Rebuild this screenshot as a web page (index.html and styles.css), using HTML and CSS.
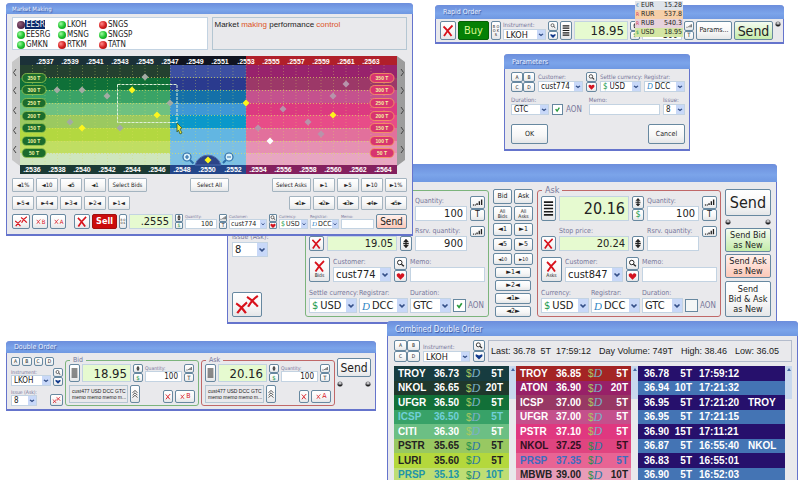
FILE: index.html
```
<!DOCTYPE html>
<html lang="en">
<head>
<meta charset="utf-8">
<title>Trading Desktop</title>
<link rel="stylesheet" href="styles.css">
</head>
<body>
<svg class="defs" aria-hidden="true">
  <symbol id="sig" viewBox="0 0 12 8"><path d="M1 7h1M3 7h1M5.5 7V5M8 7V3M10.5 7V1" stroke="#222" stroke-width="1.5" fill="none"/></symbol>
  <symbol id="mag" viewBox="0 0 12 10"><circle cx="5" cy="4" r="3" fill="#fff" stroke="#222" stroke-width="1.3"/><path d="M7.3 6.2L10.5 9" stroke="#222" stroke-width="1.8"/></symbol>
  <symbol id="heart" viewBox="0 0 12 10"><path d="M6 9.5L1.2 5Q0 2 2.3 1.2Q4.8.6 6 3Q7.2.6 9.7 1.2Q12 2 10.8 5Z" fill="#d41420"/></symbol>
  <symbol id="fav" viewBox="0 0 12 10"><path d="M6 9.5L1 4.500Q.5 2 1.5 1.500L6 3.500L10.500 1.500Q11.500 2 11 4.500Z" fill="#123a8c"/></symbol>
  <symbol id="ud" viewBox="0 0 10 12"><path d="M5 0L8.500 4H1.500ZM5 12L8.500 8H1.500Z" fill="#222"/><path d="M5 3V9M1.500 6H8.500" stroke="#222" stroke-width="1.600"/></symbol>
  <symbol id="x" viewBox="0 0 12 12"><path d="M1.500 2Q5 5 9.500 11.500M10.500 1Q6 5 2 11.500" stroke="#d8121c" stroke-width="1.800" fill="none"/></symbol>
  <symbol id="xx" viewBox="0 0 24 18"><path d="M2 8Q7 11 11 17M12 7Q7 11 3 17M12 2Q17 5 22 11M22 1Q16 5 13 11" stroke="#d8121c" stroke-width="2" fill="none"/></symbol>
  <symbol id="menu" viewBox="0 0 12 18"><path d="M1 2H11M1 5.500H11M1 9H11M1 12.500H11M1 16H11" stroke="#1b1b1b" stroke-width="1.800"/></symbol>
  <symbol id="chev" viewBox="0 0 10 14"><path d="M1 5L5 1L9 5M1 9L5 5L9 9M1 13L5 9L9 13" stroke="#222" stroke-width="1.300" fill="none"/></symbol>
  <symbol id="ball" viewBox="0 0 8 8"><circle cx="4" cy="4" r="3.500" fill="#77777c"/><path d="M2 2.500Q4 .8 6 2.500L4 4Z" fill="#eee"/><path d="M1 5Q4 8 7 5" stroke="#111" fill="none" stroke-width="1.300"/></symbol>
</svg>

<main class="desktop">

<section class="win large stop">
  <h2></h2>
  <div class="body cols">
    <div class="side">
      <label class="field"><span>Issue (Ask):</span><select><option>8</option></select></label>
      <button class="wide-x" aria-label="Cancel all"><svg><use href="#xx"/></svg></button>
    </div>
    <fieldset class="bid">
      <legend>Bid</legend>
      <div class="quote">
        <button aria-label="Depth"><svg><use href="#menu"/></svg></button>
        <input class="price" aria-label="Bid price" value="18.95">
        <div class="stack"><button aria-label="Step"><svg><use href="#ud"/></svg></button><button class="usd">$</button></div>
        <label class="field"><span>Quantity:</span><input value="100"></label>
        <div class="stack"><button aria-label="Volume"><svg><use href="#sig"/></svg></button><button>T</button></div>
        <button class="low" aria-label="Clear stop"><svg><use href="#x"/></svg></button>
        <label class="field"><span>Stop price:</span><input class="green" value="19.05"></label>
        <button class="low" aria-label="Step"><svg><use href="#ud"/></svg></button>
        <label class="field"><span>Rsrv. quantity:</span><input value="900"></label>
        <button class="top" aria-label="Volume"><svg><use href="#sig"/></svg></button>
      </div>
      <div class="client">
        <button class="xlabel"><svg><use href="#x"/></svg>Bids</button>
        <label class="field"><span>Customer:</span><select><option>cust774</option></select></label>
        <div class="stack"><button aria-label="Find"><svg><use href="#mag"/></svg></button><button aria-label="Favourite"><svg><use href="#heart"/></svg></button></div>
        <label class="field"><span>Memo:</span><input></label>
      </div>
      <div class="terms">
        <label class="field"><span>Settle currency:</span><span class="pick"><b>$</b><select><option>USD</option></select></span></label>
        <label class="field"><span>Registrar:</span><span class="pick"><i>D</i><select><option>DCC</option></select></span></label>
        <label class="field"><span>Duration:</span><select><option>GTC</option></select></label>
        <label class="check"><input type="checkbox" checked>AON</label>
      </div>
    </fieldset>
    <div class="ladder">
      <button>Bid</button><button>Ask</button>
      <button class="two">All<br>Bids</button><button class="two">All<br>Asks</button>
      <button>◄1</button><button>►1</button>
      <button>◄5</button><button>►5</button>
      <button class="tiny">◄10</button><button class="tiny">►10</button>
      <button class="full">►1◄</button><button class="full">►2◄</button>
      <button class="full">◄1►</button><button class="full">◄2►</button>
    </div>
    <fieldset class="ask">
      <legend>Ask</legend>
      <div class="quote">
        <button aria-label="Depth"><svg><use href="#menu"/></svg></button>
        <input class="price" aria-label="Ask price" value="20.16">
        <div class="stack"><button aria-label="Step"><svg><use href="#ud"/></svg></button><button class="usd">$</button></div>
        <label class="field"><span>Quantity:</span><input value="100"></label>
        <div class="stack"><button aria-label="Volume"><svg><use href="#sig"/></svg></button><button>T</button></div>
        <button class="low" aria-label="Clear stop"><svg><use href="#x"/></svg></button>
        <label class="field"><span>Stop price:</span><input class="green" value="20.24"></label>
        <button class="low" aria-label="Step"><svg><use href="#ud"/></svg></button>
        <label class="field"><span>Rsrv. quantity:</span><input></label>
        <button class="top" aria-label="Volume"><svg><use href="#sig"/></svg></button>
      </div>
      <div class="client">
        <button class="xlabel"><svg><use href="#x"/></svg>Asks</button>
        <label class="field"><span>Customer:</span><select><option>cust847</option></select></label>
        <div class="stack"><button aria-label="Find"><svg><use href="#mag"/></svg></button><button aria-label="Favourite"><svg><use href="#heart"/></svg></button></div>
        <label class="field"><span>Memo:</span><input></label>
      </div>
      <div class="terms">
        <label class="field"><span>Currency:</span><span class="pick"><b>$</b><select><option>USD</option></select></span></label>
        <label class="field"><span>Registrar:</span><span class="pick"><i>D</i><select><option>DCC</option></select></span></label>
        <label class="field"><span>Duration:</span><select><option>GTC</option></select></label>
        <label class="check"><input type="checkbox">AON</label>
      </div>
    </fieldset>
    <div class="sends">
      <button class="send">Send</button>
      <div class="balls"><svg><use href="#ball"/></svg><svg><use href="#ball"/></svg></div>
      <button class="new go">Send Bid<br>as New</button>
      <button class="new warn">Send Ask<br>as New</button>
      <button class="new both">Send<br>Bid &amp; Ask<br>as New</button>
    </div>
  </div>
</section>

<section class="win small market">
  <h2>Market Making</h2>
  <div class="body">
    <div class="boxes">
      <ul class="tickers">
        <li class="on">EESR</li><li class="up">LKOH</li><li>SNGS</li>
        <li class="up">EESRG</li><li class="up">MSNG</li><li class="up">SNGSP</li>
        <li class="up">GMKN</li><li>RTKM</li><li>TATN</li>
      </ul>
      <p class="note">Market <em>making</em> performance <em>control</em></p>
    </div>
    <svg class="chart" viewBox="12 56 395 118" role="img" aria-label="Market depth">
      <defs>
        <linearGradient id="metal"><stop offset="0" stop-color="#c8c8c8"/><stop offset="1" stop-color="#9c9c9c"/></linearGradient>
        <path id="d" d="M0-3.500L3.500 0L0 3.500L-3.500 0Z"/>
        <rect id="p" x="-12" y="-4.500" width="24" height="9" rx="4.500"/>
      </defs>
      <path d="M20 56L12 62V160L20 166ZM397 56L405 62V160L397 166Z" fill="url(#metal)"/>
      <path d="M16 69L13.500 72.500L16 76M16 87L13.500 90.500L16 94M16 107L13.500 110.500L16 114M16 127L13.500 130.500L16 134M16 146L13.500 149.500L16 153M401 69L403.500 72.500L401 76M401 87L403.500 90.500L401 94M401 107L403.500 110.500L401 114M401 127L403.500 130.500L401 134M401 146L403.500 149.500L401 153" fill="none" stroke="#444"/>
      <g class="bands">
        <path fill="#1b3138" d="M20 56h150v9H20z"/><path fill="#24402f" d="M20 65h150v13H20z"/><path fill="#0f7038" d="M20 78h150v12H20z"/><path fill="#3aa366" d="M20 90h150v13H20z"/><path fill="#6fc180" d="M20 103h150v12H20z"/><path fill="#9bc960" d="M20 115h150v13H20z"/><path fill="#b3d840" d="M20 128h150v13H20z"/><path fill="#c0de62" d="M20 141h150v12H20z"/><path fill="#cfe6bd" d="M20 153h150v12H20z"/><path fill="#1b3a34" d="M20 165h150v9H20z"/>
        <path fill="#101420" d="M170 56h76v9h-76z"/><path fill="#3d50a2" d="M170 65h76v13h-76z"/><path fill="#2a3a8e" d="M170 78h76v12h-76z"/><path fill="#1470a8" d="M170 90h76v13h-76z"/><path fill="#3e98d6" d="M170 103h76v12h-76z"/><path fill="#0a98ca" d="M170 115h76v13h-76z"/><path fill="#62b6e2" d="M170 128h76v13h-76z"/><path fill="#7cc0e4" d="M170 141h76v24h-76z"/><path fill="#23468a" d="M170 165h76v9h-76z"/>
        <path fill="#b01f2a" d="M246 56h151v9H246z"/><path fill="#98226c" d="M246 65h151v13H246z"/><path fill="#9c3868" d="M246 78h151v12H246z"/><path fill="#c4528e" d="M246 90h151v13H246z"/><path fill="#dc3a80" d="M246 103h151v12H246z"/><path fill="#e84c88" d="M246 115h151v13H246z"/><path fill="#e2709c" d="M246 128h151v13H246z"/><path fill="#e690b2" d="M246 141h151v12H246z"/><path fill="#e8a6c2" d="M246 153h151v12H246z"/><path fill="#84205e" d="M246 165h151v9H246z"/>
      </g>
      <path class="grid" d="M46 77.500H372M46 90.500H372M46 103.500H372M46 115.500H372M46 128.500H372M46 141.500H372M46 153.500H372"/>
      <path class="grid v" d="M32.500 65V165M45 65V165M57.500 65V165M70 65V165M82.500 65V165M95 65V165M107.500 65V165M120 65V165M132.500 65V165M145 65V165M157.500 65V165M170.500 65V165M183 65V165M195.500 65V165M208 65V165M220.500 65V165M233 65V165M246 65V165M258.500 65V165M271 65V165M283.500 65V165M296 65V165M308.500 65V165M321 65V165M333.500 65V165M346 65V165M358.500 65V165M371 65V165M384 65V165"/>
      <rect x="117.500" y="84.500" width="59.500" height="38" fill="none" stroke="#dff0d8" stroke-dasharray="3 1"/>
      <g class="axis">
        <text x="45" y="64">.2537</text><text x="70" y="64">.2539</text><text x="95" y="64">.2541</text><text x="120" y="64">.2543</text><text x="145" y="64">.2545</text><text x="170" y="64">.2547</text><text x="195" y="64">.2549</text><text x="220" y="64">.2551</text><text x="246" y="64">.2553</text><text x="271" y="64">.2555</text><text x="296" y="64">.2557</text><text x="321" y="64">.2559</text><text x="346" y="64">.2561</text><text x="371" y="64">.2563</text>
        <text x="32" y="172">.2536</text><text x="57" y="172">.2538</text><text x="82" y="172">.2540</text><text x="107" y="172">.2542</text><text x="132" y="172">.2544</text><text x="157" y="172">.2546</text><text x="182" y="172">.2548</text><text x="207" y="172">.2550</text><text x="233" y="172">.2552</text><text x="258" y="172">.2554</text><text x="283" y="172">.2556</text><text x="308" y="172">.2558</text><text x="333" y="172">.2560</text><text x="358" y="172">.2562</text><text x="383" y="172">.2564</text>
      </g>
      <g class="pills left">
        <use href="#p" x="34" y="78"/><use href="#p" x="34" y="90"/><use href="#p" x="34" y="103"/><use href="#p" x="34" y="116"/><use href="#p" x="34" y="128"/><use href="#p" x="34" y="141"/><use href="#p" x="34" y="153"/>
        <text x="34" y="80">350 T</text><text x="34" y="92">300 T</text><text x="34" y="105">250 T</text><text x="34" y="118">200 T</text><text x="34" y="130">150 T</text><text x="34" y="143">100 T</text><text x="34" y="155">50 T</text>
      </g>
      <g class="pills right">
        <use href="#p" x="382" y="78"/><use href="#p" x="382" y="90"/><use href="#p" x="382" y="103"/><use href="#p" x="382" y="116"/><use href="#p" x="382" y="128"/><use href="#p" x="382" y="141"/><use href="#p" x="382" y="153"/>
        <text x="382" y="80">350 T</text><text x="382" y="92">300 T</text><text x="382" y="105">250 T</text><text x="382" y="118">200 T</text><text x="382" y="130">150 T</text><text x="382" y="143">100 T</text><text x="382" y="155">50 T</text>
      </g>
      <path d="M195 165A13.500 13.500 0 0 1 221 165Z" fill="#2c4488" stroke="#4e6cae"/>
      <g fill="#a3aba3">
        <use href="#d" x="57" y="90"/><use href="#d" x="82" y="90"/><use href="#d" x="107" y="96"/><use href="#d" x="145" y="77"/><use href="#d" x="170" y="103"/><use href="#d" x="70" y="122"/><use href="#d" x="120" y="128"/>
      </g>
      <g fill="#b794ab">
        <use href="#d" x="346" y="84"/><use href="#d" x="333" y="96"/><use href="#d" x="283" y="109"/><use href="#d" x="308" y="122"/><use href="#d" x="258" y="128"/><use href="#d" x="321" y="134"/>
      </g>
      <g fill="#fdf51c">
        <use href="#d" x="132" y="90"/><use href="#d" x="157" y="115"/><use href="#d" x="82" y="128"/><use href="#d" x="246" y="103"/><use href="#d" x="333" y="115"/><use href="#d" x="208" y="160"/>
      </g>
      <use href="#d" x="270" y="141" fill="#fff"/>
      <g fill="#d8f0fa" stroke="#2a6ca8" stroke-width="1.200">
        <path d="M190 160L193.500 163.500M226 160L223 163" stroke-width="2"/>
        <circle cx="187" cy="157" r="4"/><circle cx="229" cy="157" r="4"/>
        <path d="M185 157H189M187 155V159M227 157H231"/>
      </g>
      <path d="M177 123L182 128L180 129L182 133L180 134L178.500 130L177 132Z" fill="#e8e840" stroke="#3c5a28" stroke-width=".8"/>
    </svg>
    <div class="shift">
      <button>◄1%</button><button>◄10</button><button>◄5</button><button>◄1</button><button class="sel">Select Bids</button>
      <button class="sel mid-button">Select All</button>
      <button class="sel">Select Asks</button><button>►1</button><button>►5</button><button>►10</button><button>►1%</button>
    </div>
    <div class="shift">
      <button>►5◄</button><button>►4◄</button><button>►3◄</button><button>►2◄</button><button>►1◄</button>
      <span class="gap"></span>
      <button>◄1►</button><button>◄2►</button><button>◄3►</button><button>◄4►</button><button>◄5►</button>
    </div>
    <div class="order">
      <button class="w18" aria-label="Cancel all"><svg><use href="#xx"/></svg></button>
      <button class="w16 red"><svg><use href="#x"/></svg>B</button>
      <button class="w16 red"><svg><use href="#x"/></svg>A</button>
      <button class="w16 apart" aria-label="Clear"><svg><use href="#x"/></svg></button>
      <button class="sell">Sell</button>
      <button class="book">B O O K</button>
      <input class="price" aria-label="Price" value=".2555">
      <div class="stack"><button aria-label="Step"><svg><use href="#ud"/></svg></button><button class="usd">$</button></div>
      <label class="field w32"><span>Quantity:</span><input value="100"></label>
      <div class="stack"><button aria-label="Volume"><svg><use href="#sig"/></svg></button><button>T</button></div>
      <label class="field w38"><span>Customer:</span><select><option>cust774</option></select></label>
      <div class="stack"><button aria-label="Find"><svg><use href="#mag"/></svg></button><button aria-label="Favourite"><svg><use href="#heart"/></svg></button></div>
      <label class="field w28"><span>Currency:</span><span class="pick"><b>$</b><select><option>USD</option></select></span></label>
      <label class="field w28"><span>Registrar:</span><span class="pick"><i>D</i><select><option>DCC</option></select></span></label>
      <label class="field grow"><span>Memo:</span><input></label>
      <button class="send warn">Send</button>
    </div>
  </div>
</section>

<section class="win mid rapid">
  <h2>Rapid Order</h2>
  <div class="body row">
    <button class="w16" aria-label="Clear"><svg><use href="#x"/></svg></button>
    <button class="buy">Buy</button>
    <button class="book">B O O K S</button>
    <label class="field instr"><span>Instrument:</span><select><option>LKOH</option></select></label>
    <div class="stack"><button aria-label="Find"><svg><use href="#mag"/></svg></button><button aria-label="Favourite"><svg><use href="#fav"/></svg></button></div>
    <button class="depth" aria-label="Depth"><svg><use href="#menu"/></svg></button>
    <input class="price" aria-label="Price" value="18.95">
    <div class="stack"><button aria-label="Step"><svg><use href="#ud"/></svg></button><button class="usd">$</button></div>
    <label class="field qty"><input aria-label="Quantity" value="100"></label>
    <div class="stack"><button aria-label="Volume"><svg><use href="#sig"/></svg></button><button>T</button></div>
    <button class="params">Params...</button>
    <button class="send go">Send</button>
    <svg class="ball"><use href="#ball"/></svg>
  </div>
  <ul class="rates">
    <li><i>€</i>EUR<span>15.28</span></li>
    <li><i>R</i>RUR<span>537.8</span></li>
    <li><i>R</i>RUB<span>540.3</span></li>
    <li><i>$</i>USD<span>18.95</span></li>
  </ul>
</section>

<section class="win mid parameters">
  <h2>Parameters</h2>
  <div class="body">
    <div class="row">
      <div class="abcd"><button>A</button><button>B</button><button>C</button><button>D</button></div>
      <label class="field grow"><span>Customer:</span><select><option>cust774</option></select></label>
      <div class="stack"><button aria-label="Find"><svg><use href="#mag"/></svg></button><button aria-label="Favourite"><svg><use href="#heart"/></svg></button></div>
      <label class="field w40"><span>Settle currency:</span><span class="pick"><b>$</b><select><option>USD</option></select></span></label>
      <label class="field w40"><span>Registrar:</span><span class="pick"><i>D</i><select><option>DCC</option></select></span></label>
    </div>
    <div class="row">
      <label class="field w38"><span>Duration:</span><select><option>GTC</option></select></label>
      <label class="check"><input type="checkbox" checked>AON</label>
      <label class="field memo"><span>Memo:</span><input></label>
      <label class="field w22"><span>Issue:</span><select><option>8</option></select></label>
    </div>
    <div class="actions"><button>OK</button><button>Cancel</button></div>
  </div>
</section>

<section class="win mid double">
  <h2>Double Order</h2>
  <div class="body cols">
    <div class="side">
      <div class="letters"><button>A</button><button>B</button><button>C</button><button>D</button></div>
      <div class="row">
        <label class="field grow"><span>Instrument:</span><select><option>LKOH</option></select></label>
        <div class="stack"><button aria-label="Find"><svg><use href="#mag"/></svg></button><button aria-label="Favourite"><svg><use href="#fav"/></svg></button></div>
      </div>
      <div class="row ends">
        <label class="field issue"><span>Issue (Ask):</span><select><option>8</option></select></label>
        <button class="xx" aria-label="Cancel all"><svg><use href="#xx"/></svg></button>
      </div>
    </div>
    <fieldset class="bid">
      <legend>Bid</legend>
      <div class="quote">
        <button aria-label="Depth"><svg><use href="#menu"/></svg></button>
        <input class="price" aria-label="Bid price" value="18.95">
        <div class="stack"><button aria-label="Step"><svg><use href="#ud"/></svg></button><button class="usd">$</button></div>
        <label class="field"><span>Quantity:</span><input value="100"></label>
        <div class="stack"><button aria-label="Volume"><svg><use href="#sig"/></svg></button><button>T</button></div>
      </div>
      <div class="memoline">
        <p>cust477 USD DCC GTC<br>memo memo memo m...</p>
        <button class="more" aria-label="Expand"><svg><use href="#chev"/></svg></button>
        <button class="end" aria-label="Clear"><svg><use href="#x"/></svg></button>
        <button class="red"><svg><use href="#x"/></svg>B</button>
      </div>
    </fieldset>
    <fieldset class="ask">
      <legend>Ask</legend>
      <div class="quote">
        <button aria-label="Depth"><svg><use href="#menu"/></svg></button>
        <input class="price" aria-label="Ask price" value="20.16">
        <div class="stack"><button aria-label="Step"><svg><use href="#ud"/></svg></button><button class="usd">$</button></div>
        <label class="field"><span>Quantity:</span><input value="100"></label>
        <div class="stack"><button aria-label="Volume"><svg><use href="#sig"/></svg></button><button>T</button></div>
      </div>
      <div class="memoline">
        <p>cust477 USD DCC GTC<br>memo memo memo m...</p>
        <button class="more" aria-label="Expand"><svg><use href="#chev"/></svg></button>
        <button class="end" aria-label="Clear"><svg><use href="#x"/></svg></button>
        <button class="red"><svg><use href="#x"/></svg>A</button>
      </div>
    </fieldset>
    <div class="sends">
      <button class="send">Send</button>
      <div class="balls"><svg><use href="#ball"/></svg><svg><use href="#ball"/></svg></div>
    </div>
  </div>
</section>

<section class="win mid combined">
  <h2>Combined Double Order</h2>
  <div class="body">
    <div class="row">
      <div class="abcd"><button>A</button><button>B</button><button>C</button><button>D</button></div>
      <label class="field instr"><span>Instrument:</span><select><option>LKOH</option></select></label>
      <div class="stack"><button aria-label="Find"><svg><use href="#mag"/></svg></button><button aria-label="Favourite"><svg><use href="#fav"/></svg></button></div>
      <p class="stats"><span>Last: 36.78&nbsp; 5T&nbsp; 17:59:12</span><span>Day Volume: 749T</span><span>High: 38.46</span><span>Low: 36.05</span></p>
    </div>
    <div class="books">
      <table class="bids">
        <tr class="g1"><td>TROY</td><td>36.73</td><td><b>$</b><i>D</i></td><td>5T</td></tr>
        <tr class="g2"><td>NKOL</td><td>36.65</td><td><b>$</b><i>D</i></td><td>20T</td></tr>
        <tr class="g3"><td>UFGR</td><td>36.50</td><td><b>$</b><i>D</i></td><td>5T</td></tr>
        <tr class="g4"><td>ICSP</td><td>36.50</td><td><b>$</b><i>D</i></td><td>5T</td></tr>
        <tr class="g5"><td>CITI</td><td>36.30</td><td><b>$</b><i>D</i></td><td>5T</td></tr>
        <tr class="g6"><td>PSTR</td><td>35.65</td><td><b>$</b><i>D</i></td><td>5T</td></tr>
        <tr class="g7"><td>LURI</td><td>35.60</td><td><b>$</b><i>D</i></td><td>5T</td></tr>
        <tr class="g8"><td>PRSP</td><td>35.13</td><td><b>$</b><i>D</i></td><td>10T</td></tr>
      </table>
      <div class="scroll"><span></span></div>
      <table class="asks">
        <tr class="r1"><td>TROY</td><td>36.85</td><td><b>$</b><i>D</i></td><td>5T</td></tr>
        <tr class="r2"><td>ATON</td><td>36.90</td><td><b>$</b><i>D</i></td><td>20T</td></tr>
        <tr class="r3"><td>ICSP</td><td>37.00</td><td><b>$</b><i>D</i></td><td>5T</td></tr>
        <tr class="r4"><td>UFGR</td><td>37.00</td><td><b>$</b><i>D</i></td><td>5T</td></tr>
        <tr class="r5"><td>PSTR</td><td>37.10</td><td><b>$</b><i>D</i></td><td>5T</td></tr>
        <tr class="r6"><td>NKOL</td><td>37.25</td><td><b>$</b><i>D</i></td><td>5T</td></tr>
        <tr class="r7"><td>PRSP</td><td>37.35</td><td><b>$</b><i>D</i></td><td>5T</td></tr>
        <tr class="r8"><td>MBWB</td><td>39.00</td><td><b>$</b><i>D</i></td><td>10T</td></tr>
      </table>
      <div class="scroll"><span></span></div>
      <table class="tape">
        <tr><td>36.78</td><td>5T</td><td>17:59:12</td><td></td></tr>
        <tr><td>36.94</td><td>10T</td><td>17:21:32</td><td></td></tr>
        <tr><td>36.95</td><td>5T</td><td>17:21:20</td><td>TROY</td></tr>
        <tr><td>36.95</td><td>5T</td><td>17:21:15</td><td></td></tr>
        <tr><td>36.90</td><td>15T</td><td>17:11:21</td><td></td></tr>
        <tr><td>36.87</td><td>5T</td><td>16:55:40</td><td>NKOL</td></tr>
        <tr><td>36.83</td><td>5T</td><td>16:55:01</td><td></td></tr>
        <tr><td>36.90</td><td>5T</td><td>16:52:03</td><td></td></tr>
      </table>
      <div class="scroll"><span></span></div>
    </div>
  </div>
</section>

</main>
</body>
</html>
```
FILE: styles.css
```
* { box-sizing: border-box; }
body {
  margin: 0;
  background: #fff;
  color: #222;
  font-family: "DejaVu Sans Condensed", "DejaVu Sans", sans-serif;
}
.defs { position: absolute; width: 0; height: 0; }
.desktop { position: relative; min-height: 100vh; overflow: hidden; }

/* Windows */
.win {
  position: absolute;
  border: 1px solid #6574cc;
  border-width: 0 1px 2px;
  border-radius: 4px 4px 0 0;
  background: #e9e9ec;
  font-size: var(--f);
}
.small { --f: 7px; --label: 4px; --h: 10px; --arrow: 6px; --lh: 5px; }
.mid { --f: 9px; --label: 6px; --h: 11px; --arrow: 8px; --lh: 8px; }
.large { --f: 11px; --label: 7px; --h: 15px; --arrow: 10px; --lh: 10px; }
.win h2 {
  margin: 0 -1px;
  padding-left: 8px;
  border-radius: 4px 4px 0 0;
  background: linear-gradient(#6c8edc, #7ba4ea 60%, #6f98e2);
  color: #eaf2ff;
  font-size: 7px;
  font-weight: normal;
  text-shadow: 1px 1px 1px #35509c;
}
.market { left: 6px; top: 3px; width: 407px; }
.market h2 { height: 11px; line-height: 11px; font-size: 6px; padding-left: 6px; }
.stop { left: 227px; top: 164px; width: 550px; }
.stop h2 { height: 18px; }
.rapid { left: 435px; top: 5px; width: 349px; }
.rapid h2 { height: 14px; line-height: 15px; }
.parameters { left: 504px; top: 54px; width: 186px; }
.parameters h2 { height: 15px; line-height: 17px; }
.double { left: 6px; top: 341px; width: 370px; --f: 8px; --label: 5px; --lh: 6px; }
.double h2 { height: 12px; line-height: 13px; }
.combined { left: 387px; top: 321px; width: 411px; }
.combined h2 { height: 15px; line-height: 17px; font-size: 8px; }

/* Controls */
button, input, select {
  margin: 0;
  padding: 0;
  font: inherit;
  color: inherit;
  min-width: 0;
}
button {
  display: flex;
  align-items: center;
  justify-content: center;
  min-height: 0;
  border: 1px solid #6788a0;
  border-radius: 2px;
  background: linear-gradient(#fff, #f6f6f6 60%, #e4e6e8);
  line-height: 1;
  white-space: nowrap;
  overflow: hidden;
}
button svg { width: 100%; height: 100%; padding: 1px; }
input, select, .pick {
  width: 100%;
  height: var(--h);
  border: 1px solid #c3d3e2;
  border-radius: 0;
  background-color: #fff;
}
input { text-align: right; padding-right: 3px; }
select {
  appearance: none;
  padding-left: 2px;
  background: #fff url("data:image/svg+xml,%3Csvg xmlns='http://www.w3.org/2000/svg' viewBox='0 0 10 14' preserveAspectRatio='none'%3E%3Crect width='10' height='14' fill='%23c8d8f8'/%3E%3Cpath d='M2.500 6L5 8.500L7.500 6' fill='none' stroke='%23344f88' stroke-width='1.600'/%3E%3C/svg%3E") right / var(--arrow) 100% no-repeat;
}
.pick { display: flex; align-items: center; padding-left: 2px; }
.pick select { flex: 1; height: 100%; border: 0; }
.pick b, .usd { color: #1b9a4c; font-weight: normal; }
.pick i, td i { font-family: "Liberation Serif", serif; color: #2f86c4; }
.price, .green { background: #e6fad0; }
.field { display: flex; flex-direction: column; justify-content: flex-end; min-width: 0; }
.field > span:first-child {
  font-size: var(--label);
  line-height: var(--lh);
  color: #77779a;
  white-space: nowrap;
}
.check { display: flex; align-items: center; align-self: flex-end; gap: 3px; height: var(--h); color: #77779a; }
.check input { appearance: none; flex: none; width: var(--h); height: var(--h); padding: 0; border-color: #6788a0; background: #f4f6f6; }
.check input:checked {
  background: #fff url("data:image/svg+xml,%3Csvg xmlns='http://www.w3.org/2000/svg' viewBox='0 0 12 12'%3E%3Cpath d='M3.500 5.500L5.500 8L8.500 3.500' fill='none' stroke='%232a9a3c' stroke-width='1.800'/%3E%3C/svg%3E") center / 100% no-repeat;
}
.stack { display: flex; flex-direction: column; flex: none; min-height: 0; }
.stack button { flex: 1; width: 100%; min-height: 0; font-size: var(--f); }
.stack svg { min-height: 0; }
.row { display: flex; }
.cols { display: flex; align-items: stretch; }
.grow { flex: 1; }
.go { background: linear-gradient(#f4fbf0, #c4ecaa); }
.warn { background: linear-gradient(#fff0ec, #fcc8b8); }
.red { color: #d8121c; }
fieldset { margin: 0; min-width: 0; border: 1px solid #7cb47c; border-radius: 3px; }
fieldset.ask { border-color: #c06868; }
legend { margin-left: 1px; padding: 0 3px; color: #77779a; }
.balls { display: flex; justify-content: space-between; }
.balls svg, .ball { width: 6px; height: 6px; }
.abcd { display: grid; grid-template-columns: 1fr 1fr; flex: none; }
.abcd button, .letters button { font-size: 5px; }

/* Stop order window */
.stop .body { padding: 2px 5px 5px 4px; gap: 4px; }
.stop .side { display: flex; flex-direction: column; justify-content: space-between; width: 36px; padding-top: 48px; margin-right: 33px; }
.stop .wide-x { width: 30px; height: 25px; }
.stop fieldset { flex: 1; padding: 0 3px 3px; display: grid; gap: 6px; }
.stop legend { height: 12px; line-height: 12px; font-size: 9px; }
.stop .quote { display: grid; grid-template-columns: 15px 1fr 12px 52px 15px; grid-template-rows: 25px 25px; gap: 5px 3px; }
.stop .price { height: 25px; font-size: 16px; }
.stop .low { align-self: end; height: 15px; }
.stop .top { height: 11px; }
.stop .stack button { font-size: 9px; }
.stop .client { display: grid; grid-template-columns: 21px 58px 13px 1fr; grid-template-rows: 25px; gap: 3px; }
.stop .xlabel { flex-direction: column; font-size: 5px; padding-bottom: 2px; }
.stop .xlabel svg { height: 14px; }
.stop .terms { display: grid; grid-template-columns: 48px 49px 41px 1fr; grid-template-rows: 25px; gap: 2px; }
.stop .check { font-size: 8px; gap: 2px; }
.stop .check input { width: 13px; height: 13px; }
.ladder { display: grid; grid-template-columns: 1fr 1fr; grid-template-rows: 15px 15px 13px 13px 12px 11px 11px 11px 11px; align-content: space-between; column-gap: 2px; width: 40px; padding-top: 5px; font-size: 7px; }
.ladder .two, .ladder .tiny { font-size: 5px; }
.ladder .full { grid-column: span 2; margin: 0 2px; }
.stop .sends { display: flex; flex-direction: column; justify-content: space-between; width: 46px; padding-top: 5px; }
.stop .send { height: 27px; font-size: 16px; }
.stop .new { height: 24px; font-size: 9px; line-height: 10px; }
.stop .both { height: 36px; }

/* Market making window */
.market .body { display: grid; gap: 4px; padding: 3px 5px 5px; }
.boxes { display: grid; grid-template-columns: 1fr 1fr; gap: 4px; margin-bottom: 2px; }
.tickers { display: grid; grid-template-columns: repeat(3, 41px); grid-auto-rows: 10px; margin: 0; padding: 2px 4px; height: 33px; list-style: none; border: 1px solid #c3d3e2; background: #fff; font-size: 8px; line-height: 10px; }
.tickers li { display: flex; align-items: center; gap: 1px; }
.tickers li::before { content: ""; width: 8px; height: 8px; border-radius: 50%; background: radial-gradient(circle at 35% 35%, #f88, #d42020 50%, #901010); }
.tickers .up::before { background: radial-gradient(circle at 35% 35%, #a0f8a0, #20c430 50%, #0c8018); }
.tickers .on::before { background: radial-gradient(circle at 35% 35%, #94607c, #542848 60%, #301830); }
.tickers .on { justify-self: start; height: 9px; color: #fff; background: linear-gradient(90deg, #fff 8px, #0a2a6c 8px); }
.note { margin: 0; padding: 2px; border: 1px solid #b4c6d2; font: 8px/10px "Liberation Sans", sans-serif; }
.note em { font-style: normal; color: #dc5428; }
.chart { display: block; width: 100%; }
.grid { stroke: #dce060; stroke-width: 1; stroke-dasharray: 1 2; opacity: .7; }
.grid.v { opacity: .35; }
.axis, .pills { font: bold 7px "Liberation Sans", sans-serif; fill: #fff; text-anchor: middle; }
.pills text { font-size: 5px; fill: #f4f6a0; }
.pills.left use { fill: #1c6c2c; stroke: #98c850; stroke-width: .8px; }
.pills.right use { fill: #d83470; stroke: #f8a060; stroke-width: .8px; }
.shift { display: flex; gap: 2px; height: 14px; font-size: 6px; }
.shift button { width: 22px; border-color: #a4b4c0; border-radius: 1px; }
.shift .sel { width: 39px; }
.shift .mid-button { margin: 0 auto; }
.shift .gap { flex: 1; }
.order { display: flex; gap: 2px; height: 15px; }
.order .stack { width: 8px; }
.order .stack button { font-size: 5px; border-radius: 1px; }
.order .stack svg { padding: 0; }
.order .price { flex: none; width: 44px; height: 15px; font-size: 11px; }
.w16 { width: 16px; }
.w18 { width: 18px; }
.w22 { width: 22px; }
.w28 { width: 29px; }
.w32 { width: 32px; }
.w38 { width: 38px; }
.w40 { width: 41px; }
.red svg { width: 7px; }
.order .red { font-size: 6px; }
.order .apart { margin-left: 6px; }
.sell { width: 25px; background: #cc0c0c; color: #fff; font-size: 9px; font-weight: bold; border-color: #a01010; }
.book { width: 8px; white-space: normal; font-size: 3px; }
.order .send { width: 31px; font-size: 10px; }
.order .pick, .order select { padding-left: 1px; }

/* Rapid order window */
.rapid .row { gap: 2px; padding: 2px 2px 2px 4px; height: 23px; }
.rapid .buy { width: 31px; background: #058005; color: #d8f890; font-size: 11px; border-color: #056005; }
.rapid .book { width: 10px; font-size: 4px; }
.rapid .instr { width: 43px; }
.rapid .stack { width: 10px; }
.rapid .stack button { font-size: 6px; }
.rapid .depth { width: 12px; }
.rapid .price { flex: 1; height: 19px; font-size: 13px; }
.rapid .qty { width: 40px; }
.rapid .params { width: 36px; font-size: 7px; }
.rapid .send { width: 39px; font-size: 14px; }
.rates { position: absolute; left: 199px; top: -4px; width: 48px; margin: 0; padding: 0; list-style: none; font-size: 7px; line-height: 9px; }
.rates li { display: flex; padding: 0 1px; background: #dfe4ea; }
.rates li:nth-child(2) { background: #f6cfa8; }
.rates li:nth-child(3) { background: #e6d2dc; }
.rates li:nth-child(4) { background: #d4e6a4; }
.rates i { width: 5px; font-style: normal; font-size: 5px; color: #d0305c; }
.rates li:first-child i { color: #2c7cc0; }
.rates li:last-child i { color: #1b9a4c; }
.rates span { margin-left: auto; }

/* Parameters window */
.parameters { --f: 8px; }
.parameters .body { display: grid; gap: 3px; padding: 3px 4px 5px 6px; }
.parameters .row { gap: 3px; height: 20px; }
.parameters .abcd { width: 24px; }
.parameters .stack { width: 11px; }
.parameters .memo { flex: 1; margin-left: 4px; }
.actions { display: flex; justify-content: space-between; margin-top: 6px; font-size: 7px; }
.actions button { width: 37px; height: 20px; }

/* Double order window */
.double .body { gap: 2px; padding: 3px 4px 3px; }
.double .side { width: 52px; padding-top: 1px; display: grid; align-content: space-between; }
.letters { display: grid; grid-template-columns: repeat(4, 1fr); gap: 2px; width: 43px; height: 9px; }
.double .side .row { gap: 2px; height: 18px; }
.double .side .stack, .double .quote .stack { width: 10px; }
.double .stack button { font-size: 6px; }
.double .ends { justify-content: space-between; align-items: flex-end; }
.double .issue { width: 26px; }
.double .xx { width: 13px; height: 12px; }
.double fieldset { flex: 1; padding: 0 3px 2px; display: grid; gap: 3px; }
.double legend { height: 8px; line-height: 8px; font-size: 7px; }
.double .quote { display: grid; grid-template-columns: 11px 1fr 10px 37px 11px; grid-template-rows: 18px; gap: 2px; }
.double .price { height: 18px; font-size: 13px; }
.memoline { display: flex; gap: 2px; height: 18px; align-items: flex-end; }
.memoline p { flex: none; width: 59px; height: 18px; margin: 0; padding: 2px; overflow: hidden; white-space: nowrap; border: 1px solid #b4c6d2; font: 5px/6px "Liberation Sans", sans-serif; }
.memoline button { width: 10px; height: 13px; font-size: 7px; }
.memoline .more { height: 18px; }
.memoline .end { margin-left: auto; }
.memoline .red { width: 20px; }
.double .sends { width: 34px; padding-top: 2px; display: flex; flex-direction: column; gap: 4px; }
.double .send { height: 19px; font-size: 12px; }

/* Combined double order window */
.combined .body { padding: 4px 5px 0 6px; }
.combined .row { gap: 3px; height: 22px; }
.combined .abcd { width: 26px; }
.combined .instr { width: 47px; }
.combined .stack { width: 12px; }
.stats { display: flex; flex: 1; justify-content: space-between; align-items: center; margin: 0; padding: 0 12px 0 2px; border: 1px solid #b4bccc; white-space: nowrap; font: 9px/10px "Liberation Sans", sans-serif; }
.books { display: flex; margin-top: 4px; }
table { flex: 1; border-collapse: collapse; table-layout: fixed; font: bold 10px/12px "Liberation Sans", sans-serif; color: #fff; }
td { padding: 0; height: 14px; white-space: nowrap; }
tr:nth-child(odd) td { height: 15px; }
td:first-child { width: 40px; padding-left: 4px; }
.bids td:nth-child(3), .asks td:nth-child(3) { width: 18px; }
td b { color: #a8c860; font-weight: normal; }
td i { font-size: 12px; font-weight: normal; color: #7cb0c8; }
.bids td:last-child, .asks td:last-child { width: 25px; padding-right: 6px; text-align: right; }
.asks td:last-child { padding-right: 3px; }
.tape { flex: none; width: 147px; }
.tape td:first-child { width: 36px; padding-left: 6px; }
.tape td:nth-child(2) { width: 18px; text-align: right; }
.tape td:nth-child(3) { width: 56px; padding-left: 7px; }
.tape tr { background: #4474b4; }
.tape tr:nth-child(odd) { background: #26106c; }
.scroll { flex: none; width: 7px; }
.scroll span { display: block; height: 33px; padding-top: 2px; background: #c8d8ee; }
.scroll span::before { content: ""; display: block; width: 0; margin: 0 auto; border: 2px solid transparent; border-bottom: 3px solid #4466a0; border-top: 0; }
.g1 { background: #173c40; }
.g2 { background: #1f382c; }
.g3 { background: #127038; }
.g4 { background: #38a268; color: #70d0d8; }
.g5 { background: #6cbf84; }
.g6 { background: #98c862; color: #222; }
.g7 { background: #b4d83c; color: #222; }
.g8 { background: #bede74; color: #2094a8; }
.r1 { background: #a42424; }
.r2 { background: #982068; }
.r3 { background: #983864; }
.r4 { background: #c4508c; }
.r5 { background: #e03880; }
.r6 { background: #e04480; color: #301020; }
.r7 { background: #e86494; color: #3c6cc0; }
.r8 { background: #e89cb8; color: #222; }
.g6 b, .g7 b, .g8 b, .r6 b, .r7 b, .r8 b { color: #28904c; }
.g6 i, .g7 i, .g8 i, .r6 i, .r7 i, .r8 i { color: #2c78a8; }
```
